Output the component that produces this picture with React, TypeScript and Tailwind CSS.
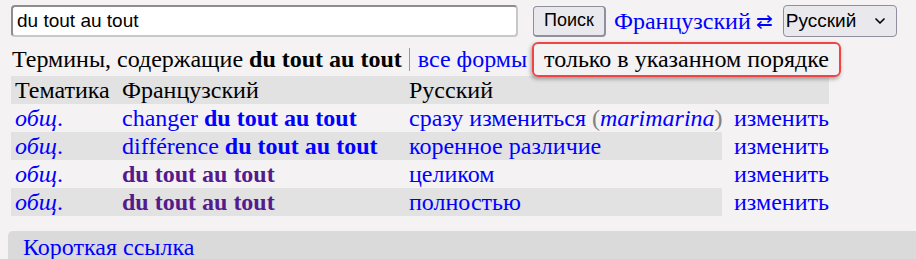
import { ChevronDown } from "lucide-react";

type Row = {
  subj: string;
  pre?: string;
  term: string;
  visited?: boolean;
  ru: string;
  author?: string;
};

const rows: Row[] = [
  { subj: "общ.", pre: "changer ", term: "du tout au tout", ru: "сразу измениться", author: "marimarina" },
  { subj: "общ.", pre: "différence ", term: "du tout au tout", ru: "коренное различие" },
  { subj: "общ.", term: "du tout au tout", visited: true, ru: "целиком" },
  { subj: "общ.", term: "du tout au tout", visited: true, ru: "полностью" },
];

const App = () => {
  return (
    <div className="w-[916px] h-[259px] overflow-hidden bg-[#f4f2f2] text-[24px] text-black font-['Liberation_Serif',serif]">
      {/* search bar */}
      <div className="flex items-center pl-[11px] pt-[5px] h-[37px]">
        <div className="w-[507px] h-[32px] rounded-[4px] border-2 border-[#8d8d8d] border-r-[#c8c8c8] border-b-[#c8c8c8] bg-white pl-[4px] flex items-center text-[19px] font-['Liberation_Sans',sans-serif]">
          du tout au tout
        </div>
        <div className="ml-[15px] w-[73px] h-[31px] rounded-[4px] border border-[#8f8f9d] border-b-2 border-r-2 bg-[#e9e9ed] flex items-center justify-center text-[18px] font-['Liberation_Sans',sans-serif]">
          Поиск
        </div>
        <span className="ml-[8px] text-[#0000ff]">Французский</span>
        <span className="ml-[5px] text-[#0000ff] text-[20px]">⇄</span>
        <div className="ml-[10px] w-[114px] h-[32px] rounded-[4px] border border-[#8f8f9d] bg-[#e9e9ed] flex items-center justify-between pl-[2px] pr-[8px] text-[19px] font-['Liberation_Sans',sans-serif]">
          Русский
          <ChevronDown size={16} strokeWidth={2.5} />
        </div>
      </div>

      {/* terms line */}
      <div className="flex items-center pl-[12px] mt-[5px] h-[34px]">
        <span>
          Термины, содержащие <b>du tout au tout</b>
        </span>
        <span className="ml-[7px] h-[23px] border-l border-[#9a9a9a]" />
        <span className="ml-[8px] text-[#0000ff]">все формы</span>
        <div className="relative z-10 ml-[5px] h-[35px] w-[309px] rounded-[6px] border-2 border-[#f04545] pl-[10px] flex items-center shadow-[-1px_2px_4px_rgba(0,0,0,0.35)]">
          только в указанном порядке
        </div>
      </div>

      {/* table */}
      <div className="ml-[11px] grid grid-cols-[107px_287px_317px_107px] leading-[28px]">
        <div className="bg-[#e2e2e2] pl-[4px] h-[28px]">Тематика</div>
        <div className="bg-[#e2e2e2] pl-[4px] h-[28px]">Французский</div>
        <div className="bg-[#e2e2e2] pl-[4px] h-[28px]">Русский</div>
        <div className="bg-[#e2e2e2] h-[28px]" />
        {rows.map((r, i) => {
          const bg = i % 2 === 1 ? "bg-[#e2e2e2]" : "";
          return [
            <div key={`s${i}`} className={`${bg} pl-[4px] h-[28px] text-[#0000ff]`}>
              <i>{r.subj.slice(0, -1)}</i>.
            </div>,
            <div key={`f${i}`} className={`${bg} pl-[4px] h-[28px] whitespace-nowrap`}>
              {r.pre && <span className="text-[#0000ff]">{r.pre}</span>}
              <b className={r.visited ? "text-[#551a8b]" : "text-[#0000ff]"}>{r.term}</b>
            </div>,
            <div key={`r${i}`} className={`${bg} pl-[4px] h-[28px] whitespace-nowrap text-[#0000ff]`}>
              {r.ru}
              {r.author && (
                <>
                  {" "}
                  <span className="text-[#808080]">(</span>
                  <i>{r.author}</i>
                  <span className="text-[#808080]">)</span>
                </>
              )}
            </div>,
            <div key={`e${i}`} className="pl-[12px] h-[28px] text-[#0000ff]">
              изменить
            </div>,
          ];
        })}
      </div>

      {/* short link */}
      <div className="mt-[15px] ml-[8px] h-[40px] rounded-tl-[5px] bg-[#dadada] pl-[15px] pt-[2px] text-[#0000ff] leading-[28px]">
        Короткая ссылка
      </div>
    </div>
  );
};

export default App;
